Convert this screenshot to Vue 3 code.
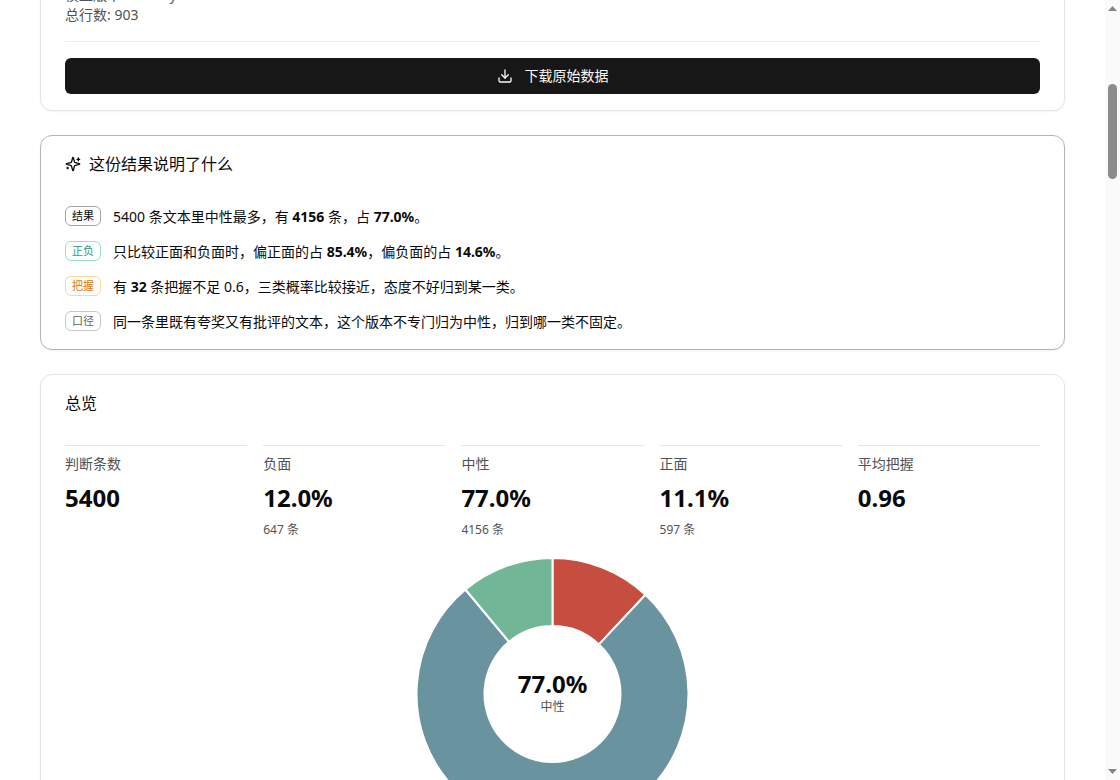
<script setup>
const insights = [
  { tag: '结果', tone: 'strong', parts: ['5400 条文本里中性最多，有 ', '4156', ' 条，占 ', '77.0%', '。'] },
  { tag: '正负', tone: 'green', parts: ['只比较正面和负面时，偏正面的占 ', '85.4%', '，偏负面的占 ', '14.6%', '。'] },
  { tag: '把握', tone: 'amber', parts: ['有 ', '32', ' 条把握不足 0.6，三类概率比较接近，态度不好归到某一类。'] },
  { tag: '口径', tone: 'muted', parts: ['同一条里既有夸奖又有批评的文本，这个版本不专门归为中性，归到哪一类不固定。'] },
]

const stats = [
  { label: '判断条数', value: '5400' },
  { label: '负面', value: '12.0%', count: 647 },
  { label: '中性', value: '77.0%', count: 4156 },
  { label: '正面', value: '11.1%', count: 597 },
  { label: '平均把握', value: '0.96' },
]

const OUTER = 136
const INNER = 68
const point = (r, turn) => {
  const a = turn * 2 * Math.PI
  return `${(r * Math.sin(a)).toFixed(2)} ${(-r * Math.cos(a)).toFixed(2)}`
}
const slices = []
let sum = 0
for (const [count, color] of [[647, '#c64e41'], [4156, '#6a93a0'], [597, '#70b697']]) {
  const from = sum / 5400
  sum += count
  const to = sum / 5400
  const large = to - from > 0.5 ? 1 : 0
  slices.push({
    color,
    d: `M${point(OUTER, from)}A${OUTER} ${OUTER} 0 ${large} 1 ${point(OUTER, to)}L${point(INNER, to)}A${INNER} ${INNER} 0 ${large} 0 ${point(INNER, from)}Z`,
  })
}
</script>

<template>
  <div class="viewport">
    <main class="content">
      <section class="card source">
        <div class="meta">
          <p>模型版本: ternary</p>
          <p>总行数: 903</p>
        </div>
        <div class="actions">
          <button type="button" class="download">
            <svg class="icon" viewBox="0 0 24 24" aria-hidden="true">
              <path d="M12 15V3" />
              <path d="M21 15v4a2 2 0 0 1-2 2H5a2 2 0 0 1-2-2v-4" />
              <path d="m7 10 5 5 5-5" />
            </svg>
            下载原始数据
          </button>
        </div>
      </section>

      <section class="card findings">
        <h2 class="title">
          <svg class="icon" viewBox="0 0 24 24" aria-hidden="true">
            <path d="M9.937 15.5A2 2 0 0 0 8.5 14.063l-6.135-1.582a.5.5 0 0 1 0-.962L8.5 9.936A2 2 0 0 0 9.937 8.5l1.582-6.135a.5.5 0 0 1 .963 0L14.063 8.5A2 2 0 0 0 15.5 9.937l6.135 1.581a.5.5 0 0 1 0 .964L15.5 14.063a2 2 0 0 0-1.437 1.437l-1.582 6.135a.5.5 0 0 1-.963 0z" />
            <path d="M20 3v4M22 5h-4M4 17v2M5 18H3" />
          </svg>
          这份结果说明了什么
        </h2>
        <ul class="list">
          <li v-for="item in insights" :key="item.tag">
            <span class="tag" :class="item.tone">{{ item.tag }}</span>
            <p><template v-for="(part, i) in item.parts" :key="i"><strong v-if="i % 2">{{ part }}</strong><template v-else>{{ part }}</template></template></p>
          </li>
        </ul>
      </section>

      <section class="card overview">
        <h2 class="title">总览</h2>
        <dl class="stats">
          <div v-for="s in stats" :key="s.label" class="stat">
            <dt>{{ s.label }}</dt>
            <dd class="value">{{ s.value }}</dd>
            <dd v-if="s.count" class="count">{{ s.count }} 条</dd>
          </div>
        </dl>
        <div class="chart">
          <svg class="donut" viewBox="-137.5 -138 275 276" role="img" aria-label="情感分布">
            <path v-for="s in slices" :key="s.color" :d="s.d" :fill="s.color" />
          </svg>
          <div class="center">
            <strong>77.0%</strong>
            <span>中性</span>
          </div>
        </div>
      </section>
    </main>

    <div class="scrollbar" aria-hidden="true">
      <svg class="arrow" viewBox="0 0 9 5"><path d="M0 5 4.5 0 9 5z" /></svg>
      <div class="track"><div class="thumb"></div></div>
      <svg class="arrow" viewBox="0 0 9 5"><path d="M0 0 4.5 5 9 0z" /></svg>
    </div>
  </div>
</template>

<style scoped>
.viewport {
  display: flex;
  height: 100vh;
  overflow: hidden;
  background: #fff;
  color: #0a0a0a;
  font: 14px/20px "Noto Sans", "Noto Sans CJK SC", sans-serif;
}
.content {
  flex: 1;
  min-width: 0;
  display: flex;
  flex-direction: column;
  gap: 24px;
  padding: 0 40px;
  overflow: hidden;
}
.card {
  flex: none;
  box-sizing: border-box;
  border: 1px solid #e5e5e5;
  border-radius: 12px;
  padding: 16px 24px;
  background: #fff;
  box-shadow: 0 1px 2px rgba(0, 0, 0, 0.05);
}
.source {
  margin-top: -32px;
}
.meta {
  color: #525252;
}
p,
dl,
dd,
ul,
h2 {
  margin: 0;
  padding: 0;
}
.actions {
  margin-top: 16px;
  padding-top: 16px;
  border-top: 1px solid #ececec;
}
.download {
  display: flex;
  align-items: center;
  justify-content: center;
  gap: 12px;
  width: 100%;
  height: 36px;
  border: 0;
  border-radius: 6px;
  background: #171717;
  color: #fafafa;
  font: inherit;
}
.icon {
  flex: none;
  width: 16px;
  height: 16px;
  fill: none;
  stroke: currentColor;
  stroke-width: 2;
  stroke-linecap: round;
  stroke-linejoin: round;
}
.findings {
  border-color: #b5b5b5;
}
.title {
  display: flex;
  align-items: center;
  gap: 8px;
  font-size: 16px;
  line-height: 24px;
  font-weight: 400;
}
.list {
  display: flex;
  flex-direction: column;
  gap: 12px;
  margin-top: 29px;
  list-style: none;
}
.list li {
  display: flex;
  align-items: flex-start;
  gap: 12px;
  line-height: 23px;
}
.tag {
  flex: none;
  box-sizing: border-box;
  margin-top: 1px;
  padding: 0 6px;
  border: 1px solid;
  border-radius: 6px;
  font-size: 11px;
  line-height: 18px;
}
.strong {
  border-color: #a3a3a3;
}
.green {
  color: #2a9d78;
  border-color: #9bdcc8;
}
.amber {
  color: #d97b16;
  border-color: #fbd79a;
}
.muted {
  color: #606060;
  border-color: #c8c8c8;
}
.stats {
  display: grid;
  grid-template-columns: repeat(5, minmax(0, 1fr));
  gap: 16px;
  margin-top: 30px;
}
.stat {
  border-top: 1px solid #e5e5e5;
  padding-top: 8px;
}
dt {
  color: #525252;
}
.value {
  margin-top: 8px;
  font-size: 24px;
  line-height: 32px;
  font-weight: 700;
}
.count {
  margin-top: 8px;
  font-size: 12px;
  line-height: 16px;
  color: #525252;
}
.chart {
  display: grid;
  place-items: center;
  margin-top: 18px;
}
.donut {
  grid-area: 1 / 1;
  width: 275px;
  height: 276px;
  stroke: #fff;
  stroke-width: 2;
  stroke-linejoin: bevel;
}
.center {
  grid-area: 1 / 1;
  display: flex;
  flex-direction: column;
  align-items: center;
  padding-bottom: 5px;
}
.center strong {
  font-size: 24px;
  line-height: 31px;
}
.center span {
  font-size: 12px;
  line-height: 16px;
  color: #525252;
}
.scrollbar {
  flex: none;
  box-sizing: border-box;
  display: flex;
  flex-direction: column;
  align-items: center;
  width: 15px;
  padding: 6px 0;
  background: #fafafa;
}
.arrow {
  width: 9px;
  height: 5px;
  fill: #858585;
}
.track {
  flex: 1;
}
.thumb {
  width: 9px;
  height: 95px;
  margin-top: 73px;
  border-radius: 5px;
  background: #8b8b8b;
}
</style>

<style>
body {
  overflow: hidden;
}
</style>
